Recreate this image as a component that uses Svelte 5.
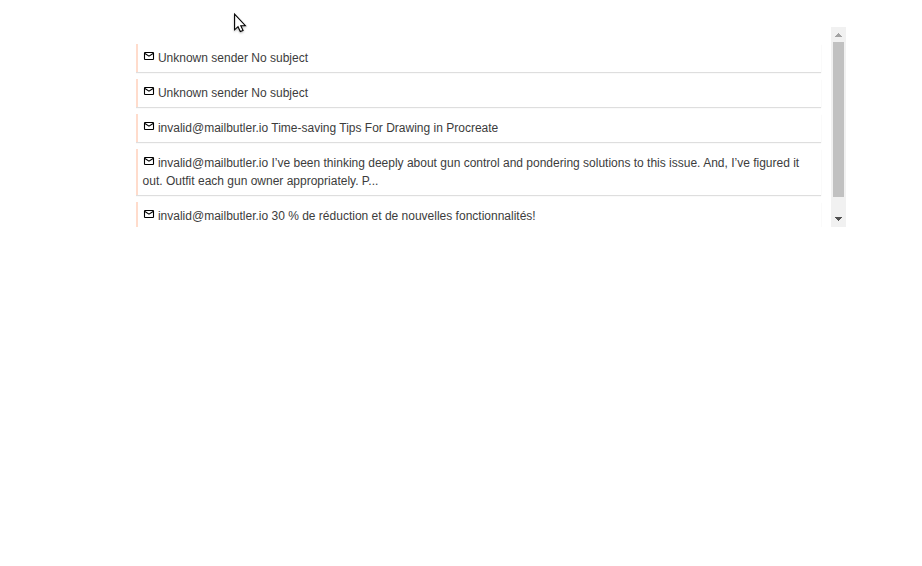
<script>
  const messages = [
    'Unknown sender No subject',
    'Unknown sender No subject',
    'invalid@mailbutler.io Time-saving Tips For Drawing in Procreate',
    'invalid@mailbutler.io I’ve been thinking deeply about gun control and pondering solutions to this issue. And, I’ve figured it out. Outfit each gun owner appropriately. P...',
    'invalid@mailbutler.io 30 % de réduction et de nouvelles fonctionnalités!'
  ];
</script>

<main>
  <div class="panel">
    <div class="list">
      {#each messages as message}
        <div class="item"><svg class="mail" viewBox="0 0 12 12"><rect x="1.5" y="2.5" width="9" height="7" rx="0.6" /><path d="M1.9 3.5 6 6.2l4.1-2.7" /></svg> {message}</div>
      {/each}
    </div>
    <div class="scrollbar">
      <svg class="arrow" viewBox="0 0 15 15" shape-rendering="crispEdges"><path fill="#a3a3a3" d="M7 6h1v1h1v1h1v1h1v1H4V9h1V8h1V7h1z" /></svg>
      <div class="thumb"></div>
      <svg class="arrow" viewBox="0 0 15 15" shape-rendering="crispEdges"><path fill="#505050" d="M4 5h7v1h-1v1H9v1H8v1H7V8H6V7H5V6H4z" /></svg>
    </div>
  </div>
  <svg class="cursor" viewBox="0 0 16 24"><path d="M1.6 2.2v15.6l3.4-3.1 2.3 4.9 2.8-1.2-2.3-4.7h4.6z" /></svg>
</main>

<style>
  :global(body) {
    background: #fff;
  }
  main {
    position: relative;
    height: 566px;
    padding: 27px 76px 0 136px;
    box-sizing: border-box;
    overflow: hidden;
    font: 12px/18px "Liberation Sans", Arial, sans-serif;
    color: #3c3c3c;
  }
  .panel {
    display: flex;
    justify-content: space-between;
    height: 200px;
    overflow: hidden;
  }
  .list {
    display: flex;
    flex-direction: column;
    gap: 7px;
    width: 687px;
    height: 183px;
    padding-top: 17px;
    overflow: hidden;
  }
  .item {
    flex: none;
    width: 685px;
    box-sizing: border-box;
    padding: 5px 5px 5px 4.6px;
    border-left: 2px solid #ffdccc;
    box-shadow: 0 1px 1px rgba(0, 0, 0, 0.13);
  }
  .mail {
    width: 12px;
    height: 12px;
    vertical-align: baseline;
    fill: none;
    stroke: #000;
    stroke-width: 1.1;
  }
  .scrollbar {
    display: flex;
    flex-direction: column;
    width: 15px;
    background: #f1f1f1;
  }
  .arrow {
    width: 15px;
    height: 15px;
  }
  .thumb {
    height: 155px;
    margin: 0 2px 15px;
    background: #c1c1c1;
  }
  .cursor {
    position: absolute;
    left: 233px;
    top: 12px;
    width: 16px;
    height: 24px;
    fill: #fff;
    stroke: #000;
    stroke-width: 1.1;
    filter: drop-shadow(0 1px 1px rgba(0, 0, 0, 0.3));
  }
</style>
